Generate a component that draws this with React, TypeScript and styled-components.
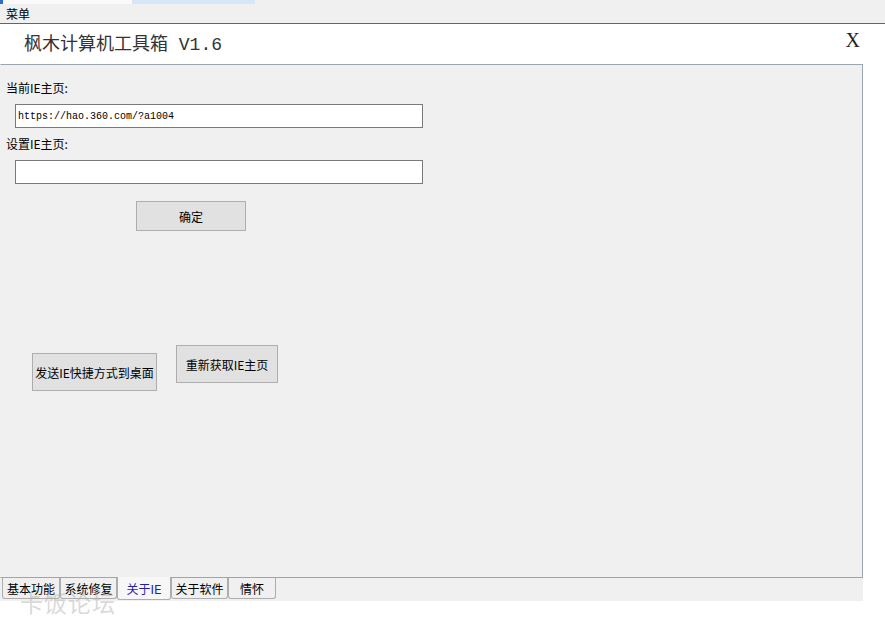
import React, { FC } from 'react'
import styled, { createGlobalStyle } from 'styled-components'

const GlobalStyle = createGlobalStyle`
  html, body {
    margin: 0;
    padding: 0;
    background: #ffffff;
  }
  body {
    font-family: "Noto Sans CJK SC", "DejaVu Sans", sans-serif;
    font-size: 12px;
    color: #000;
  }
`

const Window = styled.div`
  position: relative;
  width: 885px;
  height: 625px;
  overflow: hidden;
  background: #ffffff;
`

const TopStrip = styled.div`
  display: flex;
  height: 4px;
  background: #f0f0f0;
`

const StripPiece = styled.div<{ $w: number; $bg: string }>`
  width: ${p => p.$w}px;
  background: ${p => p.$bg};
`

const MenuBar = styled.div`
  height: 19px;
  display: flex;
  align-items: center;
  padding-left: 6px;
  background: #f0f0f0;
  border-bottom: 1px solid #646464;
  font-size: 12px;
  line-height: 14px;
`

const TitleBar = styled.div`
  height: 40px;
  display: flex;
  align-items: center;
  justify-content: space-between;
  padding: 0 25px 0 24px;
  background: #ffffff;
`

const Title = styled.div`
  font-family: "Liberation Mono", "Noto Sans CJK SC", monospace;
  font-size: 18px;
  color: #333333;
  margin-top: -4px;
`

const CloseX = styled.div`
  font-family: "Liberation Serif", serif;
  font-size: 20px;
  color: #222;
  margin-top: -7px;
`

const Body = styled.div`
  display: flex;
`

const Panel = styled.div`
  box-sizing: border-box;
  width: 863px;
  height: 514px;
  background: #f0f0f0;
  border: 1px solid #9aa6b2;
  border-left-color: #f0f0f0;
  padding: 16px 0 0 5px;
  display: flex;
  flex-direction: column;
  align-items: flex-start;
`

const Label = styled.div<{ $top: number }>`
  margin-top: ${p => p.$top}px;
  height: 14px;
  line-height: 14px;
  font-size: 12px;
`

const TextBox = styled.div`
  box-sizing: border-box;
  margin: 9px 0 0 9px;
  width: 408px;
  height: 24px;
  background: #ffffff;
  border: 1px solid #7a7a7a;
  padding-left: 2px;
  display: flex;
  align-items: center;
  font-family: "Liberation Mono", monospace;
  font-size: 10px;
  color: #000;
`

const Button = styled.div<{ $w: number; $h: number; $top?: number }>`
  box-sizing: border-box;
  width: ${p => p.$w}px;
  height: ${p => p.$h}px;
  margin-top: ${p => p.$top || 0}px;
  background: #e1e1e1;
  border: 1px solid #adadad;
  display: flex;
  align-items: center;
  justify-content: center;
  font-size: 12px;
  white-space: nowrap;
  cursor: default;
`

const OkRow = styled.div`
  margin: 17px 0 0 130px;
`

const ActionRow = styled.div`
  display: flex;
  align-items: flex-start;
  gap: 19px;
  margin: 114px 0 0 26px;
`

const TabStrip = styled.div`
  display: flex;
  width: 863px;
  height: 23px;
  background: #f0f0f0;
  padding-left: 2px;
  box-sizing: border-box;
`

const Tab = styled.div<{ $w: number; $active?: boolean }>`
  box-sizing: border-box;
  width: ${p => p.$w}px;
  height: ${p => (p.$active ? 23 : 21)}px;
  margin-top: ${p => (p.$active ? -1 : 0)}px;
  background: ${p => (p.$active ? '#f7f7f7' : '#f0f0f0')};
  border: 1px solid #adadad;
  border-top: none;
  border-radius: 0 0 3px 3px;
  display: flex;
  align-items: center;
  justify-content: center;
  font-size: 12px;
  color: ${p => (p.$active ? '#1f1fa8' : '#000')};
  font-family: ${p => (p.$active ? '"DejaVu Sans", "Noto Sans CJK SC", sans-serif' : 'inherit')};
`

const Watermark = styled.div`
  position: absolute;
  left: 20px;
  top: 589px;
  font-size: 23px;
  line-height: 26px;
  color: rgba(170, 170, 170, 0.45);
  pointer-events: none;
  letter-spacing: 1px;
`

const tabs = [
  { name: '基本功能', w: 58 },
  { name: '系统修复', w: 57 },
  { name: '关于IE', w: 54, active: true },
  { name: '关于软件', w: 57 },
  { name: '情怀', w: 48 },
]

const App: FC = () => {
  return (<>
    <GlobalStyle />
    <Window>
      <TopStrip>
        <StripPiece $w={3} $bg="#2a6fc9" />
        <StripPiece $w={129} $bg="#fafafa" />
        <StripPiece $w={123} $bg="#d6e8f7" />
      </TopStrip>
      <MenuBar>菜单</MenuBar>
      <TitleBar>
        <Title>枫木计算机工具箱 V1.6</Title>
        <CloseX>X</CloseX>
      </TitleBar>
      <Body>
        <Panel>
          <Label $top={0}>当前IE主页:</Label>
          <TextBox>https://hao.360.com/?a1004</TextBox>
          <Label $top={9}>设置IE主页:</Label>
          <TextBox />
          <OkRow>
            <Button $w={110} $h={30}>确定</Button>
          </OkRow>
          <ActionRow>
            <Button $w={125} $h={38} $top={8}>发送IE快捷方式到桌面</Button>
            <Button $w={102} $h={38}>重新获取IE主页</Button>
          </ActionRow>
        </Panel>
      </Body>
      <TabStrip>
        {tabs.map(t => (
          <Tab key={t.name} $w={t.w} $active={t.active}>{t.name}</Tab>
        ))}
      </TabStrip>
      <Watermark>卡饭论坛</Watermark>
    </Window>
  </>)
}

export default App
